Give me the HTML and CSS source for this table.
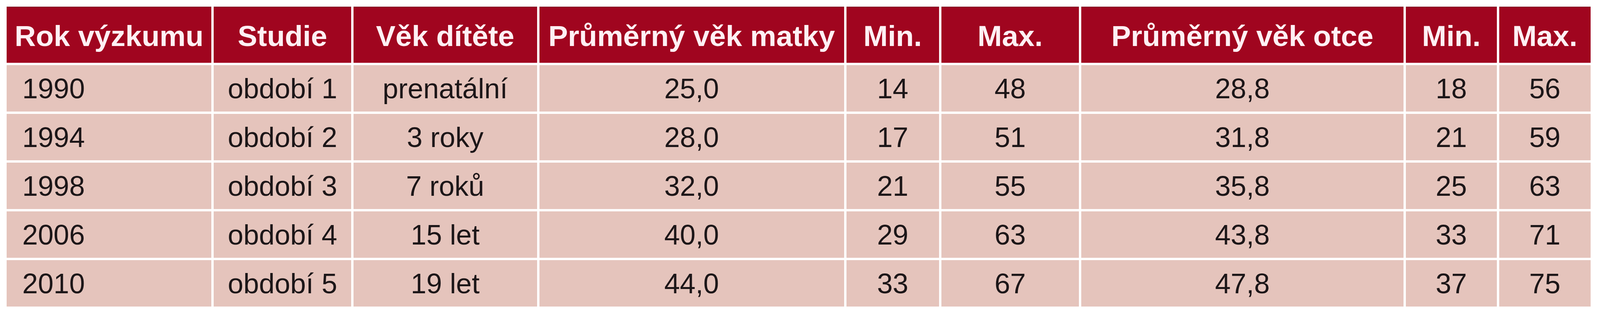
FILE: index.html
```html
<!DOCTYPE html>
<html lang="cs">
<head>
<meta charset="utf-8">
<title>Věk rodičů</title>
<link rel="stylesheet" href="styles.css">
</head>
<body>
<table class="data">
  <thead>
    <tr>
      <th>Rok výzkumu</th>
      <th>Studie</th>
      <th>Věk dítěte</th>
      <th>Průměrný věk matky</th>
      <th>Min.</th>
      <th>Max.</th>
      <th>Průměrný věk otce</th>
      <th>Min.</th>
      <th>Max.</th>
    </tr>
  </thead>
  <tbody>
    <tr><td class="year">1990</td><td>období 1</td><td>prenatální</td><td>25,0</td><td>14</td><td>48</td><td>28,8</td><td>18</td><td>56</td></tr>
    <tr><td class="year">1994</td><td>období 2</td><td>3 roky</td><td>28,0</td><td>17</td><td>51</td><td>31,8</td><td>21</td><td>59</td></tr>
    <tr><td class="year">1998</td><td>období 3</td><td>7 roků</td><td>32,0</td><td>21</td><td>55</td><td>35,8</td><td>25</td><td>63</td></tr>
    <tr><td class="year">2006</td><td>období 4</td><td>15 let</td><td>40,0</td><td>29</td><td>63</td><td>43,8</td><td>33</td><td>71</td></tr>
    <tr><td class="year">2010</td><td>období 5</td><td>19 let</td><td>44,0</td><td>33</td><td>67</td><td>47,8</td><td>37</td><td>75</td></tr>
  </tbody>
</table>
</body>
</html>
```
FILE: styles.css
```css
html, body {
  margin: 0;
  padding: 0;
  background: #ffffff;
}

.data {
  display: grid;
  grid-template-columns:
    minmax(0, 548fr) minmax(0, 367fr) minmax(0, 491fr)
    minmax(0, 815fr) minmax(0, 248fr) minmax(0, 368fr)
    minmax(0, 862fr) minmax(0, 243fr) minmax(0, 245fr);
  grid-template-rows: 144px repeat(5, 119px);
  gap: 6px;
  margin: 17px 24px 0 17px;
  font-family: "Liberation Sans", Arial, sans-serif;
}

.data thead,
.data tbody,
.data tr {
  display: contents;
}

.data th,
.data td {
  display: flex;
  align-items: center;
  justify-content: center;
  padding: 0;
  white-space: nowrap;
  overflow: hidden;
}

.data th {
  background: #a0051f;
  border-top: 2px solid #86182a;
  color: #fff0f4;
  font-weight: bold;
  font-size: 75px;
  padding-top: 4px;
}

.data td {
  background: #e5c4bc;
  color: #1c1618;
  font-size: 72px;
}

.data td.year {
  justify-content: flex-start;
  padding-left: 40px;
}
```
